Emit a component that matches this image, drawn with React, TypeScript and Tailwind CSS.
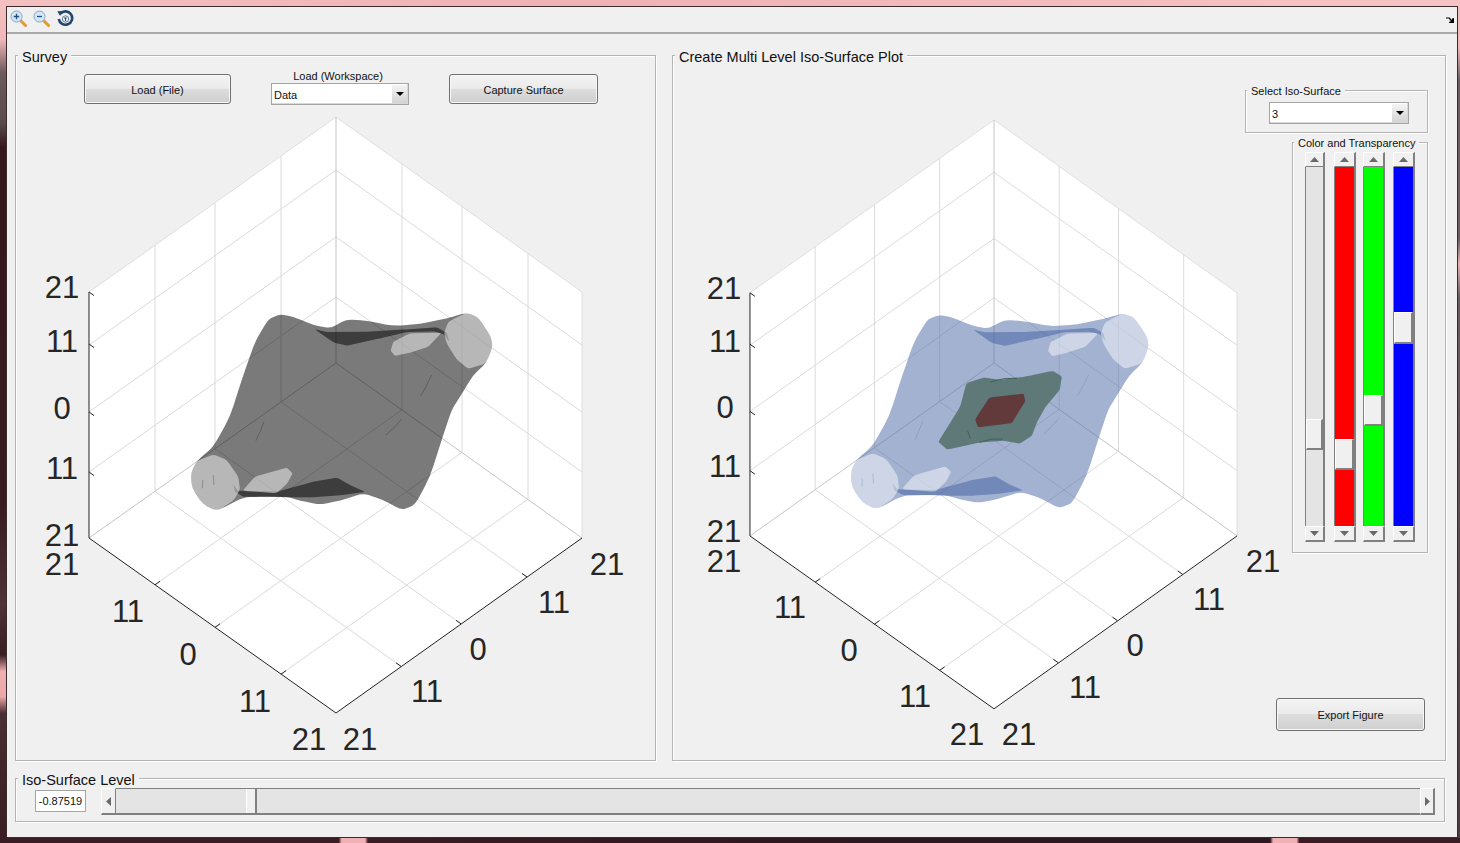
import type { ReactNode } from "react";

type Pt = [number, number];
type Label = [string, number, number];

const BG = "bg-[#f0f0f0]";
const BUTTON_RAISED =
  "border-t border-l border-t-white border-l-white border-r-2 border-b-2 border-r-[#808080] border-b-[#808080]";

// surface outlines, traced at 3x around (180,300) on the left plot
const OUTLINE: Pt[] = [
  [300, 43], [340, 50], [400, 75], [450, 85], [500, 58], [560, 62], [640, 78], [720, 72], [800, 55],
  [860, 38], [895, 52], [932, 108], [938, 140], [918, 190], [880, 225], [840, 290], [815, 330],
  [785, 420], [750, 530], [705, 615], [665, 630], [610, 600], [550, 580], [480, 602], [420, 614],
  [360, 602], [320, 590], [260, 590], [190, 592], [110, 634], [68, 612], [36, 565], [33, 520],
  [50, 483], [100, 440], [150, 350], [185, 240], [225, 125], [265, 58],
];
const CAP_RIGHT: Pt[] = [
  [860, 38], [895, 52], [932, 108], [938, 140], [918, 190], [865, 207], [830, 178], [800, 130], [792, 100], [805, 65],
];
const CAP_LEFT: Pt[] = [
  [100, 463], [140, 480], [175, 530], [180, 570], [160, 602], [110, 634], [68, 612], [36, 565], [33, 520], [50, 483],
];
const LOBE_UPPER: Pt[] = [[632, 152], [640, 125], [690, 100], [785, 98], [745, 140], [690, 158], [645, 168]];
const LOBE_LOWER: Pt[] = [[188, 572], [225, 530], [320, 503], [338, 520], [322, 550], [290, 580]];
const BAND_UPPER: Pt[] = [
  [405, 88], [440, 96], [560, 95], [680, 88], [770, 82], [800, 98], [808, 125], [790, 102], [760, 94], [680, 96],
  [600, 115], [500, 137], [460, 127],
];
const BAND_LOWER: Pt[] = [
  [160, 552], [172, 572], [210, 574], [290, 575], [400, 545], [472, 533], [510, 555], [556, 576], [480, 586], [400, 592],
  [330, 592], [260, 590], [190, 590], [165, 575],
];
const STREAKS: Pt[][] = [
  [[252, 365], [240, 395], [228, 422]],
  [[755, 225], [738, 260], [722, 288]],
  [[665, 358], [640, 385], [618, 405]],
  [[100, 525], [102, 555]],
  [[68, 540], [67, 565]],
];
const GREEN: Pt[] = [
  [640, 213], [668, 230], [662, 270], [620, 320], [592, 370], [577, 410], [540, 434], [490, 425], [420, 430],
  [320, 452], [293, 428], [320, 385], [360, 320], [378, 250], [430, 233], [480, 240], [560, 230],
];
const RED: Pt[] = [[448, 294], [552, 282], [557, 305], [516, 372], [413, 384], [405, 360]];

const LEFT_LABELS: Label[] = [
  ["21", 62, 287], ["11", 62, 341], ["0", 62, 408], ["11", 62, 468], ["21", 62, 535], ["21", 62, 564],
  ["11", 128, 611], ["0", 188, 654], ["11", 255, 701], ["21", 309, 739], ["21", 360, 739], ["11", 427, 691],
  ["0", 478, 649], ["11", 554, 602], ["21", 607, 564],
];
const RIGHT_LABELS: Label[] = [
  ["21", 724, 288], ["11", 725, 341], ["0", 725, 407], ["11", 725, 466], ["21", 724, 531], ["21", 724, 561],
  ["11", 790, 607], ["0", 849, 650], ["11", 915, 696], ["21", 967, 734], ["21", 1019, 734], ["11", 1085, 687],
  ["0", 1135, 645], ["11", 1209, 599], ["21", 1263, 561],
];

const WALL_LEFT = [-181, -121, -55];
const WALL_RIGHT = [66, 126, 192];
const LEVELS = [-193, -126, -66];

// rounds only the corners of a traced outline, the sides stay straight
function smooth(points: Pt[], round = 0.3) {
  const toward = (p: Pt, q: Pt) => `${p[0] + (q[0] - p[0]) * round} ${p[1] + (q[1] - p[1]) * round}`;
  const count = points.length;
  return (
    points
      .map((p, i) => {
        const prev = points[(i + count - 1) % count];
        const next = points[(i + 1) % count];
        return `${i === 0 ? "M" : "L"}${toward(p, prev)} Q${p[0]} ${p[1]} ${toward(p, next)}`;
      })
      .join(" ") + " Z"
  );
}

function Panel({
  title,
  small,
  className,
  children,
}: {
  title: string;
  small?: boolean;
  className: string;
  children: ReactNode;
}) {
  return (
    <div
      className={`relative border border-[#b4b4b4] shadow-[1px_1px_0_#fff,inset_1px_1px_0_#fff] ${className}`}
    >
      <span
        className={`absolute ${BG} px-[4px] leading-[14px] whitespace-nowrap text-[#111] ${
          small ? "-top-[7px] left-[1px] text-[11px]" : "-top-[6px] left-[2px] text-[14.5px]"
        }`}
      >
        {title}
      </span>
      {children}
    </div>
  );
}

function PushButton({ label, className }: { label: string; className: string }) {
  return (
    <div
      className={`flex items-center justify-center rounded-[3px] border border-[#707070] bg-[linear-gradient(to_bottom,#f3f3f3_0%,#ebebeb_48%,#dddddd_50%,#cfcfcf_100%)] pt-[2px] text-[11px] text-[#111] shadow-[inset_0_0_0_1px_#f8f8f8] ${className}`}
    >
      {label}
    </div>
  );
}

function Dropdown({ value, className }: { value: string; className: string }) {
  return (
    <div
      className={`flex items-stretch border border-[#a5a5a5] bg-white pl-[2px] text-[11px] text-[#111] shadow-[inset_-1px_-1px_0_#d8d8d8] ${className}`}
    >
      <span className="flex flex-1 items-center pt-[2px]">{value}</span>
      <span className="m-[1px] flex w-[15px] items-center justify-center bg-[linear-gradient(to_bottom,#f4f4f4,#d4d4d4)]">
        <svg width="8" height="4" viewBox="0 0 8 4">
          <path d="M0 0h8L4 4z" fill="#000" />
        </svg>
      </span>
    </div>
  );
}

function Arrow({ direction }: { direction: "up" | "down" | "left" | "right" }) {
  const paths = {
    up: "M0 5 4.5 0 9 5z",
    down: "M0 0h9L4.5 5z",
    left: "M5 0v9L0 4.5z",
    right: "M0 0v9L5 4.5z",
  };
  const wide = direction === "up" || direction === "down";
  return (
    <svg width={wide ? 9 : 5} height={wide ? 5 : 9} viewBox={wide ? "0 0 9 5" : "0 0 5 9"}>
      <path d={paths[direction]} fill="#6a6a6a" />
    </svg>
  );
}

function VerticalSlider({
  track,
  thumbTop,
  thumbHeight,
  width,
}: {
  track: string;
  thumbTop: number;
  thumbHeight: number;
  width: string;
}) {
  return (
    <div className={`flex h-[390px] flex-col ${width}`}>
      <div className={`flex h-[15px] items-center justify-center ${BG} border-t border-l border-t-white border-l-white border-r-2 border-r-[#808080] border-b border-b-[#808080]`}>
        <Arrow direction="up" />
      </div>
      <div className={`relative flex-1 border-l border-r-2 border-[#808080] ${track}`}>
        <div
          className={`absolute inset-x-0 ${BG} ${BUTTON_RAISED}`}
          style={{ top: thumbTop, height: thumbHeight }}
        />
      </div>
      <div className={`flex h-[16px] items-center justify-center ${BG} ${BUTTON_RAISED}`}>
        <Arrow direction="down" />
      </div>
    </div>
  );
}

function HorizontalSlider({ thumbLeft }: { thumbLeft: number }) {
  return (
    <div className="ml-[15px] flex h-[27px] w-[1334px]">
      <div className={`flex w-[15px] items-center justify-center ${BG} border-t border-l border-t-white border-l-white border-r border-r-[#808080] border-b-2 border-b-[#808080]`}>
        <Arrow direction="left" />
      </div>
      <div className="relative flex-1 border-t border-b-2 border-[#808080] bg-[#e4e4e4]">
        <div
          className={`absolute inset-y-0 w-[11px] ${BG} border-l border-l-white border-r-2 border-r-[#808080]`}
          style={{ left: thumbLeft }}
        />
      </div>
      <div className={`flex w-[15px] items-center justify-center ${BG} ${BUTTON_RAISED}`}>
        <Arrow direction="right" />
      </div>
    </div>
  );
}

function Surface({ main, band }: { main: string; band: string }) {
  return (
    <g transform="translate(-156 -63) scale(0.3333)">
      <path d={smooth(OUTLINE)} fill={main} fillOpacity={0.52} />
      <path d={smooth(BAND_UPPER, 0.1)} fill={band} fillOpacity={0.5} />
      <path d={smooth(BAND_LOWER, 0.1)} fill={band} fillOpacity={0.5} />
      <path d={smooth(CAP_RIGHT, 0.2)} fill="#fff" fillOpacity={0.46} />
      <path d={smooth(CAP_LEFT, 0.2)} fill="#fff" fillOpacity={0.46} />
      <path d={smooth(LOBE_UPPER, 0.12)} fill="#fff" fillOpacity={0.46} />
      <path d={smooth(LOBE_LOWER, 0.12)} fill="#fff" fillOpacity={0.46} />
      {STREAKS.map((points, index) => (
        <polyline
          key={index}
          points={points.map((p) => p.join(",")).join(" ")}
          fill="none"
          stroke={band}
          strokeOpacity={0.35}
          strokeWidth={2}
        />
      ))}
    </g>
  );
}

function Plot({
  viewBox,
  width,
  cx,
  scale,
  labels,
  children,
}: {
  viewBox: string;
  width: number;
  cx: number;
  scale: number;
  labels: Label[];
  children: ReactNode;
}) {
  const line = "#dadada";
  const tick = (x1: number, y1: number, dx: number, dy: number, key: string) => (
    <line key={key} x1={x1} y1={y1} x2={x1 + dx} y2={y1 + dy} stroke="#222" />
  );

  return (
    <svg width={width} height={655} viewBox={viewBox} className="block overflow-visible">
      <g transform={`translate(${cx} 363) scale(${scale})`} fill="none">
        <path d="M0-246 246-71V175L0 350-247 175V-71Z" fill="#fff" />
        {[...WALL_LEFT, ...WALL_RIGHT].map((x) => (
          <line
            key={`wall${x}`}
            x1={x}
            y1={-246 + Math.abs(x) * 0.709}
            x2={x}
            y2={Math.abs(x) * 0.709}
            stroke={line}
          />
        ))}
        {LEVELS.map((z) => (
          <g key={z} stroke={line}>
            <line x1={0} y1={z} x2={-247} y2={z + 175} />
            <line x1={0} y1={z} x2={246} y2={z + 175} />
          </g>
        ))}
        {WALL_LEFT.map((x) => (
          <line
            key={`floorL${x}`}
            x1={x}
            y1={-x * 0.709}
            x2={x + 246}
            y2={-x * 0.709 + 175}
            stroke={line}
          />
        ))}
        {WALL_RIGHT.map((x) => (
          <line
            key={`floorR${x}`}
            x1={x}
            y1={x * 0.709}
            x2={x - 247}
            y2={x * 0.709 + 175}
            stroke={line}
          />
        ))}
        <path d="M-247-71 0-246 246-71" stroke="#dedede" />
        <path d="M246-71V175" stroke="#dedede" />
        <path d="M0-246V0M-247 175 0 0 246 175" stroke="#c4c4c4" />

        {children}

        <path d="M-247-71V175L0 350 246 175" stroke="#222" />
        {[-71, -19, 49, 109].map((y) => tick(-247, y, 5, 3.5, `z${y}`))}
        {WALL_LEFT.map((x) => tick(x + 246, -x * 0.709 + 175, -5, -3.5, `a${x}`))}
        {WALL_RIGHT.map((x) => tick(x - 247, x * 0.709 + 175, 5, -3.5, `b${x}`))}
      </g>
      {labels.map(([text, x, y], index) => (
        <text key={index} x={x} y={y + 11} textAnchor="middle" className="fill-[#262626] text-[31px]">
          {text}
        </text>
      ))}
    </svg>
  );
}

function ZoomIcon({ minus }: { minus?: boolean }) {
  return (
    <svg width="17" height="17" viewBox="0 0 17 17">
      <line x1="10.5" y1="10.5" x2="15.5" y2="15.5" stroke="#dd9a35" strokeWidth="3" strokeLinecap="round" />
      <circle cx="6.5" cy="6.5" r="5.5" fill="#d2e6f6" stroke="#86a6c4" />
      <path d={minus ? "M4 6.5h5" : "M3.8 6.5h5.4M6.5 3.8v5.4"} stroke="#24507e" strokeWidth="1.3" />
    </svg>
  );
}

function ResetIcon() {
  return (
    <svg width="18" height="17" viewBox="0 0 17 17" fill="none">
      <path d="M4 3.5A6.7 6.7 0 1 1 2.3 9" stroke="#24476e" strokeWidth="2.6" />
      <path d="M.8 1.2 6.4 1 3.6 6z" fill="#24476e" />
      <circle cx="9" cy="9" r="3.2" stroke="#5f7f9f" />
      <path d="M7.6 8h2.8M9 8v3" stroke="#24476e" />
    </svg>
  );
}

function Toolbar() {
  return (
    <div className="flex h-[27px] flex-none items-center gap-[6px] border-b-2 border-[#a8a8a8] pr-[3px] pb-[2px] pl-[3px]">
      <ZoomIcon />
      <ZoomIcon minus />
      <ResetIcon />
      <svg width="8" height="7" viewBox="0 0 8 7" className="mt-[2px] ml-auto">
        <path d="M0 1.5h3.5L6 4V2.5L8 2v5H3l.5-1.6H5L2.8 2.6H0z" fill="#000" />
      </svg>
    </div>
  );
}

function SurveyPanel() {
  return (
    <Panel title="Survey" className="h-[706px] w-[641px]">
      <div className="flex h-[49px] items-start pt-[14px] pl-[68px]">
        <PushButton label="Load (File)" className="mt-[4px] h-[30px] w-[147px]" />
        <div className="ml-[40px] w-[138px]">
          <div className="h-[13px] pr-[4px] text-center text-[11px] leading-[12px] text-[#111]">Load (Workspace)</div>
          <Dropdown value="Data" className="h-[22px]" />
        </div>
        <PushButton label="Capture Surface" className="mt-[4px] ml-[40px] h-[30px] w-[149px]" />
      </div>
      <Plot viewBox="16 105 639 655" width={639} cx={336} scale={1} labels={LEFT_LABELS}>
        <Surface main="#000" band="#000" />
      </Plot>
    </Panel>
  );
}

function ControlColumn() {
  return (
    <div className="flex h-full w-[200px] flex-none flex-col items-end pt-[34px] pr-[17px] pb-[29px]">
      <Panel title="Select Iso-Surface" small className="h-[43px] w-[183px] flex-none pt-[11px] pl-[23px]">
        <Dropdown value="3" className="h-[22px] w-[140px]" />
      </Panel>
      <Panel
        title="Color and Transparency"
        small
        className="mt-[9px] flex h-[411px] w-[136px] flex-none pt-[9px] pl-[12px]"
      >
        <VerticalSlider track="bg-[#e4e4e4]" thumbTop={252} thumbHeight={31} width="w-[20px]" />
        <VerticalSlider track="bg-[#ff0000]" thumbTop={272} thumbHeight={31} width="ml-[9px] w-[22px]" />
        <VerticalSlider track="bg-[#00ff00]" thumbTop={228} thumbHeight={31} width="ml-[7px] w-[22px]" />
        <VerticalSlider track="bg-[#0000ff]" thumbTop={145} thumbHeight={32} width="ml-[8px] w-[22px]" />
      </Panel>
      <PushButton label="Export Figure" className="mt-auto mr-[3px] h-[33px] w-[149px]" />
    </div>
  );
}

function IsoPlotPanel() {
  return (
    <Panel title="Create Multi Level Iso-Surface Plot" className="ml-[16px] flex h-[706px] w-[774px]">
      <div className="w-[572px] flex-none pt-[49px]">
        <Plot viewBox="673 105 572 655" width={572} cx={994} scale={0.988} labels={RIGHT_LABELS}>
          <Surface main="#4f6ca6" band="#3f5ea0" />
          <g transform="translate(-154 -63) scale(0.3333)">
            <path d={smooth(GREEN, 0.12)} fill="#5b7775" fillOpacity={0.96} />
            <path d="M450 247q40-14 82-12M417 430q36-14 72-10M382 395l8 24" stroke="#3f6450" strokeWidth={3} />
            <path d={smooth(RED, 0.08)} fill="#623a3b" />
          </g>
        </Plot>
      </div>
      <ControlColumn />
    </Panel>
  );
}

function LevelPanel() {
  return (
    <Panel title="Iso-Surface Level" className="mt-[17px] flex h-[44px] w-[1430px] items-start pt-[9px] pl-[19px]">
      <div className="mt-[2px] flex h-[22px] w-[51px] items-center justify-center border border-[#a5a5a5] bg-white text-[11px] text-[#111]">
        -0.87519
      </div>
      <HorizontalSlider thumbLeft={130} />
    </Panel>
  );
}

export default function App() {
  return (
    <div className="flex h-[843px] w-[1460px] flex-col overflow-hidden bg-[#3a1c24] font-['Liberation_Sans',Arial,sans-serif]">
      <div className="h-[6px] flex-none bg-[linear-gradient(to_right,#f4c0c0,#eeb2b4_40%,#f3bcbc_70%,#f6c4c4)]" />
      <div className="flex flex-1">
        <div className="w-[6px] flex-none bg-[linear-gradient(to_bottom,#f4c0c0_0%,#f0b8b8_4%,#6c5a5c_8%,#5a4a4c_14%,#36161e_17%,#3a1a22_60%,#4d3238_72%,#3a1c24_78%,#f0b0b0_80%,#eba8a8_83%,#4a2c34_85%,#3a1c24_100%)]" />
        <div className={`flex w-[1452px] flex-none flex-col border border-[#3a2a2e] ${BG}`}>
          <Toolbar />
          <div className="pt-[21px] pl-[8px]">
            <div className="flex">
              <SurveyPanel />
              <IsoPlotPanel />
            </div>
            <LevelPanel />
          </div>
        </div>
        <div className="w-[2px] flex-none bg-[linear-gradient(to_bottom,#f4c0c0_0%,#f0b8b8_5%,#6c5c62_9%,#6c5c62_28%,#e4b0b4_31%,#6c5c62_35%,#4a3a40_100%)]" />
      </div>
      <div className="h-[5px] flex-none bg-[linear-gradient(to_right,#3a1c24_0%,#3a1c24_23.2%,#f0b0b4_23.4%,#f0b0b4_25%,#3a1c24_25.2%,#2c1820_60%,#2c1820_87%,#f0b0b4_87.2%,#f0b0b4_88.8%,#3a1c24_89%,#3a1c24_100%)]" />
    </div>
  );
}
